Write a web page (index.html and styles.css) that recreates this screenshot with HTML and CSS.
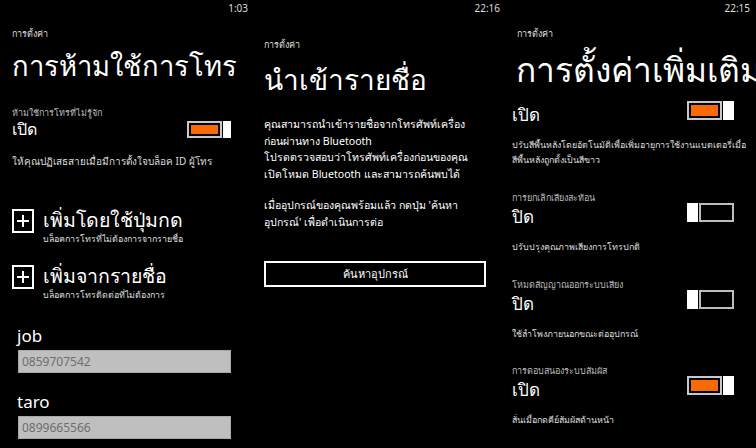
FILE: index.html
```html
<!DOCTYPE html>
<html lang="th">
<head>
<meta charset="utf-8">
<title>Settings</title>
<link rel="stylesheet" href="styles.css">
</head>
<body>
<div class="screens">
  <section class="screen s1">
    <div class="status">1:03</div>
    <div class="crumb">การตั้งค่า</div>
    <h1 class="title">การห้ามใช้การโทร</h1>
    <div class="label">ห้ามใช้การโทรที่ไม่รู้จัก</div>
    <div class="row">
      <span class="state">เปิด</span>
      <div class="toggle on small"><div class="track"><div class="fill"></div></div><div class="thumb"></div></div>
    </div>
    <div class="desc">ให้คุณปฏิเสธสายเมื่อมีการตั้งใจบล็อค ID ผู้โทร</div>
    <div class="add first">
      <div class="plus"><svg width="14" height="14" viewBox="0 0 14 14"><path d="M7 1v12M1 7h12" stroke="#fff" stroke-width="2"/></svg></div>
      <div class="add-text">
        <div class="add-title">เพิ่มโดยใช้ปุ่มกด</div>
        <div class="add-sub">บล็อคการโทรที่ไม่ต้องการจากรายชื่อ</div>
      </div>
    </div>
    <div class="add second">
      <div class="plus"><svg width="14" height="14" viewBox="0 0 14 14"><path d="M7 1v12M1 7h12" stroke="#fff" stroke-width="2"/></svg></div>
      <div class="add-text">
        <div class="add-title">เพิ่มจากรายชื่อ</div>
        <div class="add-sub">บล็อคการโทรติดต่อที่ไม่ต้องการ</div>
      </div>
    </div>
    <div class="name first-name">job</div>
    <div class="field">0859707542</div>
    <div class="name">taro</div>
    <div class="field">0899665566</div>
  </section>

  <section class="screen s2">
    <div class="status">22:16</div>
    <div class="crumb">การตั้งค่า</div>
    <h1 class="title">นำเข้ารายชื่อ</h1>
    <p class="para">คุณสามารถนำเข้ารายชื่อจากโทรศัพท์เครื่อง<br>ก่อนผ่านทาง Bluetooth<br>โปรดตรวจสอบว่าโทรศัพท์เครื่องก่อนของคุณ<br>เปิดโหมด Bluetooth และสามารถค้นพบได้</p>
    <p class="para second-para">เมื่ออุปกรณ์ของคุณพร้อมแล้ว กดปุ่ม 'ค้นหา<br>อุปกรณ์' เพื่อดำเนินการต่อ</p>
    <div class="button">ค้นหาอุปกรณ์</div>
  </section>

  <section class="screen s3">
    <div class="status">22:15</div>
    <div class="crumb">การตั้งค่า</div>
    <h1 class="title">การตั้งค่าเพิ่มเติม</h1>
    <div class="row first-row">
      <span class="state">เปิด</span>
      <div class="toggle on"><div class="track"><div class="fill"></div></div><div class="thumb"></div></div>
    </div>
    <div class="desc">ปรับสีพื้นหลังโดยอัตโนมัติเพื่อเพิ่มอายุการใช้งานแบตเตอรี่เมื่อ<br>สีพื้นหลังถูกตั้งเป็นสีขาว</div>

    <div class="label">การยกเลิกเสียงสะท้อน</div>
    <div class="row">
      <span class="state">ปิด</span>
      <div class="toggle off"><div class="thumb"></div><div class="track"></div></div>
    </div>
    <div class="desc">ปรับปรุงคุณภาพเสียงการโทรปกติ</div>

    <div class="label">โหมดสัญญาณออกระบบเสียง</div>
    <div class="row">
      <span class="state">ปิด</span>
      <div class="toggle off"><div class="thumb"></div><div class="track"></div></div>
    </div>
    <div class="desc">ใช้ลำโพงภายนอกขณะต่ออุปกรณ์</div>

    <div class="label last-label">การตอบสนองระบบสัมผัส</div>
    <div class="row">
      <span class="state">เปิด</span>
      <div class="toggle on"><div class="track"><div class="fill"></div></div><div class="thumb"></div></div>
    </div>
    <div class="desc">สั่นเมื่อกดคีย์สัมผัสด้านหน้า</div>
  </section>
</div>
</body>
</html>
```

FILE: styles.css
```css
* { box-sizing: border-box; }
html, body {
  margin: 0;
  padding: 0;
  background: #000;
  color: #fff;
  font-family: "Noto Sans", "DejaVu Sans", sans-serif;
}
.screens {
  display: grid;
  grid-template-columns: 252px 252px 252px;
  width: 756px;
  height: 448px;
  overflow: hidden;
}
.screen {
  height: 448px;
  overflow: hidden;
  display: flex;
  flex-direction: column;
}
.status {
  height: 16px;
  line-height: 16px;
  font-size: 10px;
  text-align: right;
  color: #ddd;
}
.crumb {
  margin-top: 11px;
  font-size: 9px;
  line-height: 14px;
  color: #ddd;
}
.title {
  margin: 0;
  font-weight: normal;
  white-space: nowrap;
}
.label {
  font-size: 9px;
  line-height: 14px;
  color: #bbb;
}
.row {
  display: flex;
  justify-content: space-between;
  align-items: center;
}
.state {
  font-size: 16px;
  line-height: 18px;
}
.desc {
  font-size: 9.1px;
  line-height: 15px;
  color: #ddd;
  white-space: nowrap;
}

/* toggles */
.toggle {
  display: flex;
  gap: 1px;
  height: 19px;
}
.toggle .track {
  width: 35px;
  height: 100%;
  border: 2px solid #c8c8c8;
  padding: 2px;
}
.toggle .fill {
  width: 100%;
  height: 100%;
  background: #f76a05;
}
.toggle .thumb {
  width: 11px;
  height: 100%;
  background: #fff;
}
.toggle.off .track { border-color: #bdbdbd; }
.toggle.small { height: 17px; }
.toggle.small .thumb { width: 8px; }

/* screen 1 */
.s1 { padding: 0 21px 0 12px; }
.s1 .status { margin-right: -17px; }
.s1 .title {
  margin-top: 7px;
  font-size: 27.4px;
  line-height: 36px;
}
.s1 .label { margin-top: 22px; }
.s1 .row { height: 18px; }
.s1 .desc { margin-top: 16px; font-size: 10px; line-height: 14px; }
.add {
  display: flex;
  gap: 9px;
  align-items: flex-start;
}
.add.first { margin-top: 39px; }
.add.second { margin-top: 18px; }
.plus {
  width: 22px;
  height: 24px;
  margin-top: 2px;
  border: 2px solid #fff;
  display: flex;
  align-items: center;
  justify-content: center;
}
.add-title {
  font-size: 19.5px;
  line-height: 26px;
}
.add-sub {
  font-size: 8.9px;
  line-height: 12px;
  color: #ddd;
}
.name {
  margin-top: 19px;
  padding-left: 5px;
  font-size: 17px;
  line-height: 20px;
}
.name.first-name { margin-top: 25px; }
.field {
  margin: 4px 0 0 6px;
  height: 23px;
  line-height: 21px;
  background: #bfbfbf;
  border: 1px solid #a8a8a8;
  padding-left: 3px;
  font-size: 12px;
  color: #6e6e6e;
}

/* screen 2 */
.s2 { padding: 0 18px 0 12px; }
.s2 .status { margin-right: -14px; }
.s2 .crumb { margin-top: 22px; }
.s2 .title {
  margin-top: 9px;
  font-size: 28px;
  line-height: 36px;
}
.para {
  margin: 0;
  font-size: 10.6px;
  line-height: 16.5px;
}
.s2 .para { margin-top: 19px; }
.s2 .para.second-para { margin-top: 15px; }
.button {
  margin-top: 31px;
  height: 26px;
  border: 2px solid #fff;
  font-size: 11px;
  line-height: 22px;
  text-align: center;
}

/* screen 3 */
.s3 { padding: 0 22px 0 8px; }
.s3 .status { margin-right: -16px; }
.s3 .crumb { margin-left: 5px; }
.s3 .title {
  margin: 9px 0 0 4px;
  font-size: 33.5px;
  line-height: 38px;
}
.s3 .row { margin-top: -1px; align-items: flex-start; }
.s3 .row.first-row { margin-top: 13px; }
.s3 .state { font-size: 17px; line-height: 17px; padding-top: 5px; }
.s3 .desc { margin-top: 14px; font-size: 8.95px; }
.s3 .label { margin-top: 25px; line-height: 12px; }
.s3 .label.last-label { margin-top: 24px; }
```
